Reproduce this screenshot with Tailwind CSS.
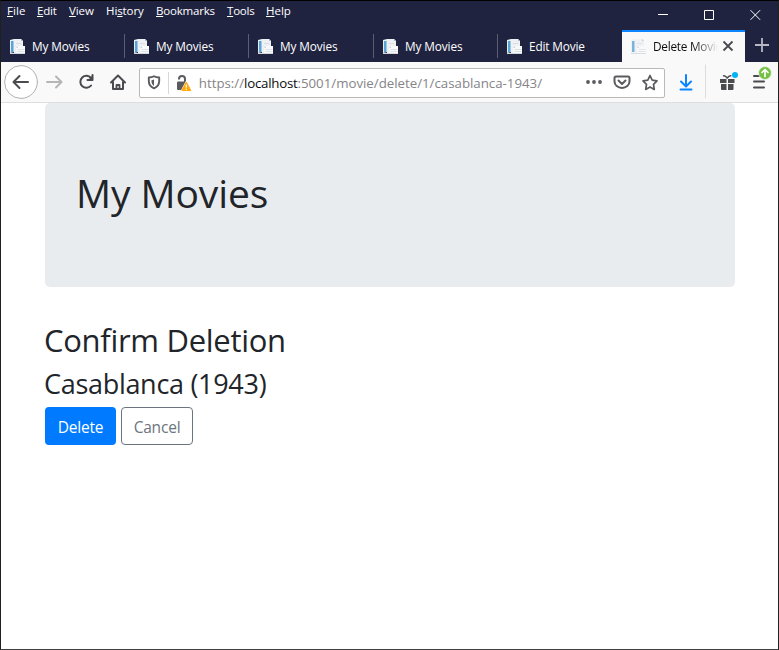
<!DOCTYPE html>
<html lang="en">
<head>
<meta charset="utf-8">
<title>Delete Movie</title>
<script src="https://cdn.jsdelivr.net/npm/@tailwindcss/browser@4"></script>
</head>
<body class="w-[779px] h-[650px] overflow-hidden bg-white font-['Open_Sans','Noto_Sans',sans-serif]">
<svg class="hidden">
  <symbol id="page" viewBox="0 0 17 17">
    <path d="M1 2l4-1v13l-4 1z" fill="#e6f0f6"/><path d="M2 3h2.500v11H2z" fill="#5ba3d3"/>
    <path d="M5 1h7l2 2v12H5z" fill="#eef0f3"/><path d="M12 1v2h2z" fill="#b5bcc5"/>
    <path d="M7 5.500h5" stroke="#d9dde2"/>
    <path d="M9 8h7v8H7v-6z" fill="#f8f9fa"/><path d="M9 8v2H7z" fill="#cfd4da"/>
    <path d="M8.500 11.500h7M8.500 13.500h7" stroke="#dde0e5"/>
    <path d="M1 15.500h15" stroke="#d3d8de"/>
  </symbol>
</svg>
<div class="w-full h-full flex flex-col border border-t-black border-x-[#202020] border-b-[#404040]">
  <div class="h-[61px] shrink-0 bg-[#202340] text-white flex flex-col">
    <div class="h-[29px] flex justify-between">
      <nav class="flex pl-[6px] h-[20px] items-center text-[11.5px] leading-[20px] whitespace-nowrap">
        <span class="w-[30px] tracking-[0.1px]"><u>F</u>ile</span>
        <span class="w-[32px] tracking-[-0.2px]"><u>E</u>dit</span>
        <span class="w-[37px] tracking-[-0.1px]"><u>V</u>iew</span>
        <span class="w-[50px] tracking-[-0.1px]">Hi<u>s</u>tory</span>
        <span class="w-[71px] tracking-[-0.2px]"><u>B</u>ookmarks</span>
        <span class="w-[39px] tracking-[-0.2px]"><u>T</u>ools</span>
        <span class="tracking-[0px]"><u>H</u>elp</span>
      </nav>
      <div class="flex gap-[34px] pr-[17px] pt-[7px]">
        <svg width="12" height="14" fill="none" stroke="#fff"><path d="M1 6.500h10"/></svg>
        <svg width="12" height="14" fill="none" stroke="#fff"><path d="M1.500 2.500h9v9h-9z"/></svg>
        <svg width="12" height="14" fill="none" stroke="#fff"><path d="M1.500 2.200l9.600 9.600M11.100 2.200L1.500 11.800"/></svg>
      </div>
    </div>
    <div class="h-[32px] flex text-[11.8px] whitespace-nowrap">
      <div class="w-[124px] flex items-center pl-[8px] gap-[6px]"><svg class="w-[17px] h-[17px]"><use href="#page"/></svg><span class="flex-1 tracking-[-0.1px] pt-px">My Movies</span><i class="w-px h-[24px] bg-[#5d5e76]"></i></div>
      <div class="w-[124px] flex items-center pl-[8px] gap-[6px]"><svg class="w-[17px] h-[17px]"><use href="#page"/></svg><span class="flex-1 tracking-[-0.1px] pt-px">My Movies</span><i class="w-px h-[24px] bg-[#5d5e76]"></i></div>
      <div class="w-[125px] flex items-center pl-[8px] gap-[6px]"><svg class="w-[17px] h-[17px]"><use href="#page"/></svg><span class="flex-1 tracking-[-0.1px] pt-px">My Movies</span><i class="w-px h-[24px] bg-[#5d5e76]"></i></div>
      <div class="w-[124px] flex items-center pl-[8px] gap-[6px]"><svg class="w-[17px] h-[17px]"><use href="#page"/></svg><span class="flex-1 tracking-[-0.1px] pt-px">My Movies</span><i class="w-px h-[24px] bg-[#5d5e76]"></i></div>
      <div class="w-[124px] flex items-center pl-[8px] gap-[6px]"><svg class="w-[17px] h-[17px]"><use href="#page"/></svg><span class="tracking-[-0.15px] pt-px">Edit Movie</span></div>
      <div class="w-[123px] h-full bg-[#f9f9fa] border-t-2 border-[#0a84ff] text-[#0c0c0d] flex items-center pl-[8px] gap-[6px] pb-[2px]"><svg class="w-[17px] h-[17px] opacity-80"><use href="#page"/></svg><span class="w-[65px] overflow-hidden tracking-[-0.25px] bg-linear-to-r from-[#0c0c0d] from-60% to-[#f9f9fa] bg-clip-text text-transparent pt-px">Delete Movie</span>
        <svg class="-ml-[2px]" width="12" height="12" fill="none" stroke="#4a4a4f" stroke-width="1.800"><path d="M1.500 1.500l9 9M10.500 1.500l-9 9"/></svg></div>
      <div class="flex-1 flex items-center justify-center pb-[2px]"><svg width="14" height="14" fill="none" stroke="#b7b8c3" stroke-width="1.800"><path d="M0 7h14M7 0v14"/></svg></div>
    </div>
  </div>
  <div class="h-[41px] shrink-0 bg-[#f9f9fa] border-b border-[#dedede] flex items-center pl-[3px]">
    <svg width="134" height="40" fill="none" stroke="#4a4a4f" stroke-width="2" stroke-linecap="round" stroke-linejoin="round">
      <circle cx="17" cy="20" r="16.400" fill="#fff" stroke="#b1b1b3" stroke-width="1"/>
      <path d="M24 20H10M15.500 14L9.500 20l6 6"/>
      <path d="M43 20h14M52 14.500l5.500 5.500-5.500 5.500" stroke="#b5b5b6"/>
      <path d="M87 16a6 6 0 1 0 .1 7.500M88.500 13v5h-5"/><path d="M89 13v5.500H83.500z" fill="#4a4a4f" stroke="none"/>
      <path d="M107 20.500L114 13.500l7 7M109 20v7h10v-7"/><path d="M112.500 27v-4h3v4" stroke-width="1.800"/>
    </svg>
    <div class="ml-[1px] w-[527px] h-[30px] mt-px bg-white border border-[#b9b9ba] rounded-[2px] flex items-center">
      <svg width="54" height="28" fill="none" stroke="#5b5b5f" stroke-width="1.900" stroke-linejoin="round">
        <path d="M8.800 8.500Q12 8.500 14 7.300q2 1.200 5.200 1.200V12c0 3.500-2 6-5.200 7.300-3.200-1.300-5.200-3.800-5.200-7.300z"/><path d="M14 10.500v6.500c-1.600-1.100-2.500-2.700-2.500-4.500v-1.300z" fill="#5b5b5f" stroke="none"/>
        <path d="M28.500 3v22" stroke="#d7d7db" stroke-width="1"/>
        <path d="M39 10.500V10a3 3 0 0 1 6 0v4" stroke-width="2"/><rect x="37" y="12.500" width="9" height="8.500" rx="1" fill="#5b5b5f" stroke="none"/>
        <path d="M46.300 12.500l-5 9.500h10z" fill="#ffa90a" stroke="#fff" stroke-width="1.400"/><path d="M46.300 13l-4.500 8.500h9z" fill="#ffa90a" stroke="#ffa90a" stroke-width="1"/>
        <path d="M46.300 15.500v3M46.300 19.700v1.200" stroke="#fff" stroke-width="1.300"/>
      </svg>
      <span class="ml-[5px] flex-1 text-[13.300px] text-[#858589] whitespace-nowrap tracking-[-0.02px] pt-[2px]">https://<span class="text-[#0c0c0d] tracking-[-0.25px]">localhost</span>:5001/movie/delete/1/casablanca-1943/</span>
      <svg width="79" height="28" fill="none" stroke="#5b5b5f" stroke-width="2" stroke-linecap="round" stroke-linejoin="round">
        <g fill="#5b5b5f" stroke="none"><circle cx="3" cy="13" r="1.900"/><circle cx="9" cy="13" r="1.900"/><circle cx="15" cy="13" r="1.900"/></g>
        <path d="M31 7.500h12q1.500 0 1.500 1.500v3.500a7.500 6.500 0 0 1-15 0V9q0-1.500 1.500-1.500zM33.500 11.500l3.500 3.500 3.500-3.500"/>
        <path d="M65 6.500l2.200 4.700 4.800.7-3.500 3.500.8 5-4.300-2.400-4.300 2.400.8-5L58 11.900l4.800-.7z" stroke-width="1.700"/>
      </svg>
    </div>
    <svg width="113" height="40" fill="none" stroke="#4a4a4f" stroke-width="2" stroke-linecap="round" stroke-linejoin="round">
      <path d="M21 13v11M16 19.500l5 5 5-5M15.500 27.500h11" stroke="#0a84ff"/>
      <path d="M40.500 3v33" stroke="#dcdcdd" stroke-width="1"/>
      <g fill="#4a4a4f" stroke="none"><path d="M55 17h6.500v4H55zM63 17h6.500v4H63zM56 22h5.500v6H57q-1 0-1-1zM63 22h5.500v5q0 1-1 1H63z"/></g>
      <path d="M62.200 16q-2-2.500-3.500-2.200M62.200 16q2-2.500 3.500-2.200" stroke-width="1.600"/>
      <circle cx="70" cy="13" r="3" fill="#00b3f4" stroke="none"/>
      <path d="M89 14h5M89 19.500h10M89 25.500h10"/>
      <circle cx="100" cy="11" r="6.400" fill="#74c043" stroke="#f9f9fa" stroke-width=".6"/>
      <path d="M100 14.500V8M97 10.500l3-3 3 3" stroke="#fff" stroke-width="1.700"/>
    </svg>
  </div>
  <main class="flex-1 px-[44px] text-[#212529] whitespace-nowrap">
    <header class="h-[184px] w-[690px] bg-[#e9ecef] rounded-[5px] px-[31px] pt-[63px]">
      <h1 class="text-[39px] leading-[54px] tracking-[-0.1px]">My Movies</h1>
    </header>
    <h2 class="-ml-px mt-[34px] text-[31px] leading-[38px] tracking-[-0.3px]">Confirm Deletion</h2>
    <h3 class="-ml-px mt-[8px] text-[27px] leading-[34px] tracking-[-0.3px]">Casablanca (1943)</h3>
    <div class="mt-[6px] flex gap-[5px] text-[15.500px]">
      <button class="w-[71px] h-[38px] pt-[4px] rounded-[4px] bg-[#007bff] text-white tracking-[-0.2px]">Delete</button>
      <button class="w-[72px] h-[38px] pt-[4px] rounded-[4px] border border-[#6c757d] text-[#6c757d] tracking-[-0.2px]">Cancel</button>
    </div>
  </main>
</div>
</body>
</html>
